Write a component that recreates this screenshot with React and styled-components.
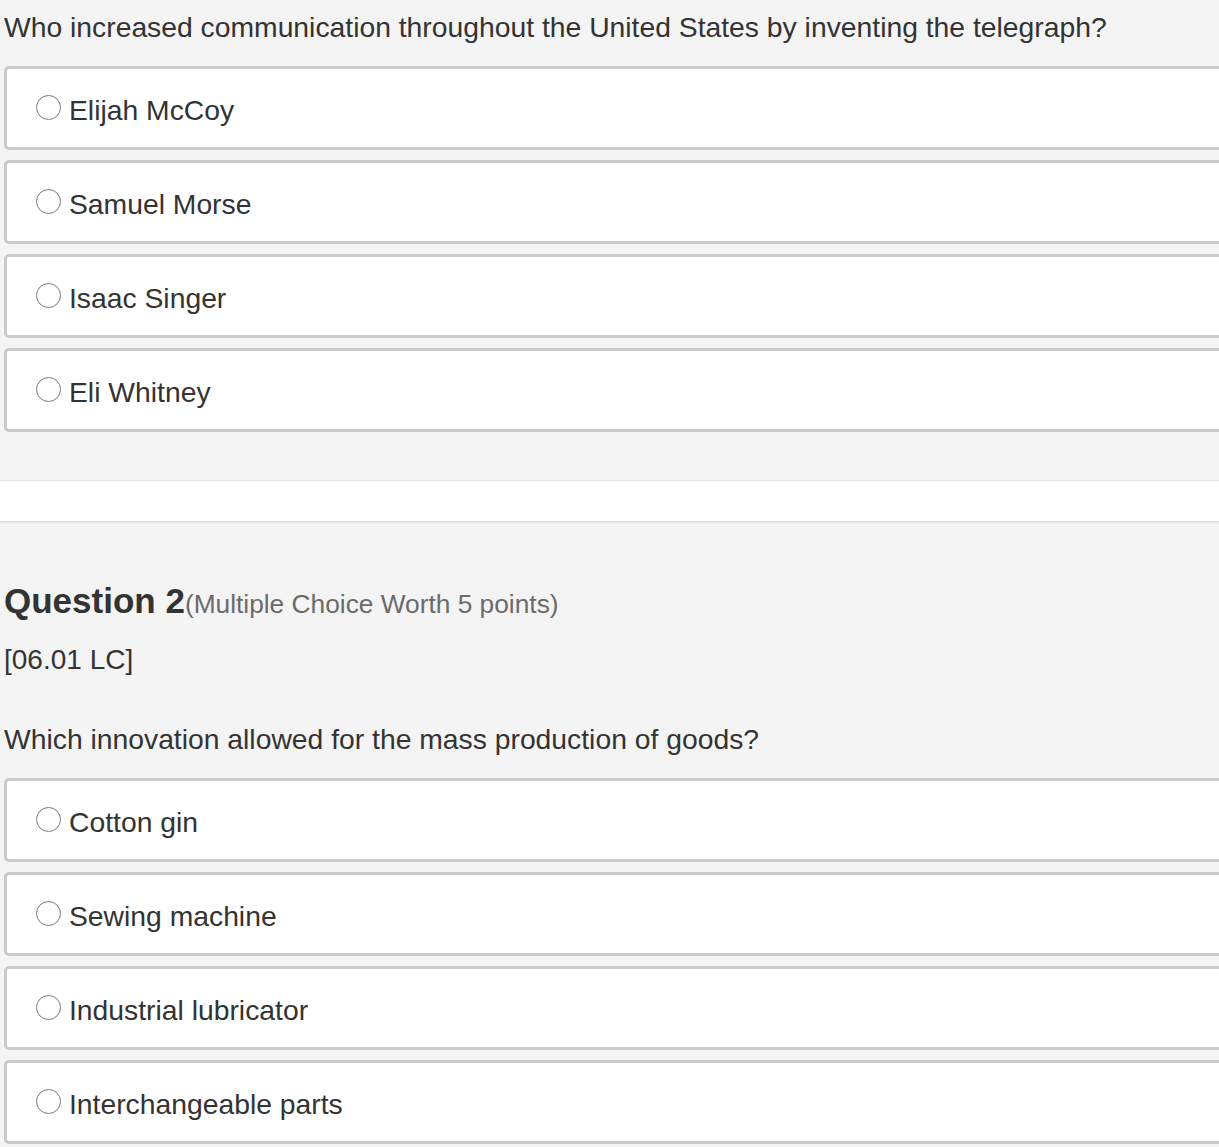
import React from 'react';
import styled, { createGlobalStyle } from 'styled-components';

const GlobalStyle = createGlobalStyle`
    html, body {
        margin: 0;
        padding: 0;
        background: #ffffff;
    }
    body {
        font-family: "Liberation Sans", Arial, Helvetica, sans-serif;
        color: #333333;
    }
`;

const Page = styled.div`
    overflow: hidden;
    display: flex;
    flex-direction: column;
    gap: 40px;
`;

const Panel = styled.section`
    background: #f4f4f4;
    padding: ${props => props.$top}px 0 48px 4px;
    border-top: ${props => props.$first ? 'none' : '1px solid #dcdcdc'};
    border-bottom: 1px solid #e2e2e2;
    box-shadow: ${props => props.$first ? 'none' : 'inset 0 2px 2px -1px rgba(0, 0, 0, 0.06)'};
`;

const Heading = styled.h2`
    margin: 0 0 17px;
    font-size: 35px;
    line-height: 40px;
    font-weight: 700;
    color: #333333;
    white-space: nowrap;
`;

const Worth = styled.span`
    font-size: 26.3px;
    font-weight: 400;
    color: #6b6b6b;
`;

const Code = styled.p`
    margin: 0 0 41px;
    font-size: 28px;
    line-height: 38px;
`;

const Prompt = styled.p`
    margin: 0 0 20px;
    font-size: 28.3px;
    line-height: 38px;
    white-space: nowrap;
`;

const Choices = styled.div`
    display: flex;
    flex-direction: column;
    gap: 10px;
    margin-right: -16px;
`;

const Choice = styled.label`
    display: flex;
    align-items: flex-start;
    height: 84px;
    box-sizing: border-box;
    padding: 22px 0 18px 29px;
    background: #ffffff;
    border: 3px solid #cacaca;
    border-radius: 5px;
    cursor: pointer;
`;

const Radio = styled.span`
    flex: none;
    width: 25px;
    height: 25px;
    margin: 4px 8px 0 0;
    box-sizing: border-box;
    border: 1.5px solid #7a7a7a;
    border-radius: 50%;
    background: #ffffff;
`;

const ChoiceText = styled.span`
    font-size: 28.3px;
    line-height: 38px;
    color: #333333;
`;

const questions = [
    {
        id: 1,
        first: true,
        prompt: 'Who increased communication throughout the United States by inventing the telegraph?',
        choices: ['Elijah McCoy', 'Samuel Morse', 'Isaac Singer', 'Eli Whitney']
    },
    {
        id: 2,
        title: 'Question 2',
        worth: '(Multiple Choice Worth 5 points)',
        code: '[06.01 LC]',
        prompt: 'Which innovation allowed for the mass production of goods?',
        choices: ['Cotton gin', 'Sewing machine', 'Industrial lubricator', 'Interchangeable parts']
    }
];

function Question({ question }) {
    return (
        <Panel $first={question.first} $top={question.first ? 8 : 59}>
            {question.title && (
                <Heading>
                    {question.title}
                    <Worth>{question.worth}</Worth>
                </Heading>
            )}
            {question.code && <Code>{question.code}</Code>}
            <Prompt>{question.prompt}</Prompt>
            <Choices>
                {question.choices.map(choice => (
                    <Choice key={choice}>
                        <Radio />
                        <ChoiceText>{choice}</ChoiceText>
                    </Choice>
                ))}
            </Choices>
        </Panel>
    );
}

export default function App() {
    return (
        <Page>
            <GlobalStyle />
            {questions.map(q => <Question key={q.id} question={q} />)}
        </Page>
    );
}
